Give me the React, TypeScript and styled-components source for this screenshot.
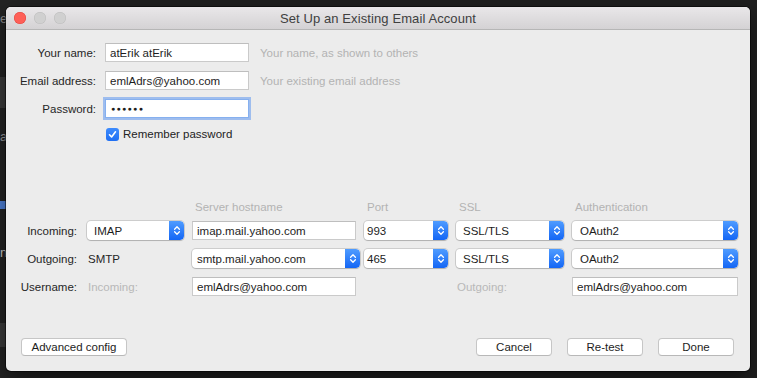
import React from "react";
import styled, { createGlobalStyle, css } from "styled-components";

const GlobalStyle = createGlobalStyle`
  html, body { margin: 0; padding: 0; background: #1e1e1e; }
  body {
    font-family: "Liberation Sans", Arial, Helvetica, sans-serif;
    -webkit-font-smoothing: antialiased;
  }
  * { box-sizing: border-box; }
`;

const FONT = `"Liberation Sans", Arial, Helvetica, sans-serif`;

/* ---------- desktop & content behind the window ---------- */

const Desktop = styled.div`
  position: relative;
  width: 757px;
  height: 378px;
  padding: 7px 7px 7px 6px;
  background: #1f1f1f;
  overflow: hidden;
`;

const BehindPanel = styled.div`
  position: absolute;
  left: 0;
  top: 0;
  width: 40px;
  height: 100%;
  background: #232323;
  display: flex;
  flex-direction: column;
  z-index: 0;
`;

const BehindBlock = styled.div<{ $mt: number; $h: number; $bg: string }>`
  margin-top: ${(p) => p.$mt}px;
  height: ${(p) => p.$h}px;
  background: ${(p) => p.$bg};
  flex: none;
`;

const BehindText = styled.div<{ $mt: number; $color: string }>`
  margin-top: ${(p) => p.$mt}px;
  font-size: 13px;
  line-height: 14px;
  color: ${(p) => p.$color};
  white-space: nowrap;
  flex: none;
`;

/* ---------- window chrome ---------- */

const Window = styled.div`
  position: relative;
  z-index: 1;
  width: 744px;
  height: 364px;
  display: flex;
  flex-direction: column;
  background: #ececec;
  border-radius: 5px;
  overflow: hidden;
  box-shadow: 0 0 0 1px rgba(0, 0, 0, 0.5), 0 8px 20px rgba(0, 0, 0, 0.5);
  font-family: ${FONT};
`;

const TitleBar = styled.div`
  flex: none;
  height: 23px;
  display: grid;
  grid-template-columns: 1fr auto 1fr;
  align-items: center;
  background: linear-gradient(#e9e7e9, #d4d2d4);
  border-bottom: 1px solid #b6b6b6;
`;

const Lights = styled.div`
  display: flex;
  gap: 8px;
  padding-left: 8px;
`;

const Light = styled.span<{ $active?: boolean }>`
  width: 12px;
  height: 12px;
  border-radius: 50%;
  ${(p) =>
    p.$active
      ? css`
          background: #fe5f57;
          box-shadow: inset 0 0 0 0.5px #e0443e;
        `
      : css`
          background: #d0d0d0;
          box-shadow: inset 0 0 0 0.5px #bcbcbc;
        `}
`;

const Title = styled.div`
  font-size: 13px;
  color: #404040;
  letter-spacing: 0.1px;
`;

const Body = styled.div`
  flex: 1;
  display: flex;
  flex-direction: column;
  padding: 13px 16px 15px 0;
  font-size: 11.5px;
  color: #232323;
`;

/* ---------- identity form ---------- */

const IdentityGrid = styled.div`
  display: grid;
  grid-template-columns: 90px 144px 1fr;
  column-gap: 9px;
  row-gap: 9px;
  align-items: center;
`;

const Label = styled.div<{ $pad?: number }>`
  text-align: right;
  padding-right: ${(p) => p.$pad ?? 0}px;
  white-space: nowrap;
  color: #262626;
`;

const Hint = styled.div`
  padding-left: 2px;
  color: #b3b3b3;
  white-space: nowrap;
`;

const Field = styled.div<{ $focused?: boolean }>`
  height: 19px;
  display: flex;
  align-items: center;
  padding: 0 4px;
  background: #fff;
  border: 1px solid #cacaca;
  border-top-color: #bebebe;
  color: #1d1d1d;
  white-space: nowrap;
  overflow: hidden;
  ${(p) =>
    p.$focused &&
    css`
      border-color: #86b0ef;
      box-shadow: 0 0 0 2px rgba(125, 170, 240, 0.7);
    `}
`;

const Dots = styled.span`
  font-size: 7px;
  letter-spacing: 1.3px;
  padding-left: 1px;
`;

const CheckRow = styled.label`
  grid-column: 2 / span 2;
  display: flex;
  align-items: center;
  gap: 4px;
  padding-left: 1px;
  height: 14px;
  white-space: nowrap;
`;

const CheckBox = styled.span`
  width: 13px;
  height: 13px;
  border-radius: 3px;
  background: linear-gradient(#3d8bfd, #1f6ff3);
  display: flex;
  align-items: center;
  justify-content: center;
`;

/* ---------- server grid ---------- */

const ServerGrid = styled.div`
  margin-top: 59px;
  display: grid;
  grid-template-columns: 73px 97px 164px 84px 108px 166px;
  grid-template-rows: 12px 19px 19px 19px;
  column-gap: 8px;
  row-gap: 9px;
  align-items: center;
`;

const ColHead = styled.div<{ $col: number }>`
  grid-column: ${(p) => p.$col};
  align-self: start;
  padding-left: 3px;
  line-height: 14px;
  color: #b3b3b3;
  white-space: nowrap;
`;

const Plain = styled.div<{ $muted?: boolean }>`
  padding-left: 1px;
  color: ${(p) => (p.$muted ? "#b8b8b8" : "#262626")};
  white-space: nowrap;
`;

const Popup = styled.div<{ $pad?: number; $wide?: number }>`
  height: 19px;
  display: flex;
  align-items: center;
  padding-left: ${(p) => p.$pad ?? 7}px;
  margin-right: ${(p) => -(p.$wide ?? 0)}px;
  background: #fff;
  border-radius: 4px;
  box-shadow: 0 0 0 1px rgba(0, 0, 0, 0.13), 0 1px 1px rgba(0, 0, 0, 0.14);
  color: #1d1d1d;
  white-space: nowrap;
  overflow: hidden;
`;

const PopupValue = styled.span`
  flex: 1;
`;

const Stepper = styled.span`
  width: 15px;
  height: 100%;
  flex: none;
  border-radius: 0 4px 4px 0;
  background: linear-gradient(#4f9cff, #1466f5);
  display: flex;
  align-items: center;
  justify-content: center;
`;

/* ---------- buttons ---------- */

const ButtonBar = styled.div`
  margin-top: auto;
  display: flex;
  align-items: center;
  padding-left: 15px;
  gap: 15px;
`;

const Spacer = styled.div`
  flex: 1;
`;

const PushButton = styled.button<{ $w: number }>`
  width: ${(p) => p.$w}px;
  height: 18px;
  padding: 0;
  background: #fff;
  border: 1px solid #c6c6c6;
  border-bottom-color: #b8b8b8;
  border-radius: 4px;
  font-family: ${FONT};
  font-size: 11.5px;
  color: #1d1d1d;
  line-height: 16px;
`;

/* ---------- icons ---------- */

const Chevrons = () => (
  <svg width="8" height="11" viewBox="0 0 8 11" fill="none">
    <path d="M1.6 4.2 L4 1.8 L6.4 4.2" stroke="#fff" strokeWidth="1.3" strokeLinecap="round" strokeLinejoin="round" />
    <path d="M1.6 6.8 L4 9.2 L6.4 6.8" stroke="#fff" strokeWidth="1.3" strokeLinecap="round" strokeLinejoin="round" />
  </svg>
);

const CheckMark = () => (
  <svg width="9" height="9" viewBox="0 0 9 9" fill="none">
    <path d="M1.5 4.8 L3.6 7 L7.5 1.8" stroke="#fff" strokeWidth="1.6" strokeLinecap="round" strokeLinejoin="round" />
  </svg>
);

const Select: React.FC<{ value: string; pad?: number; wide?: number }> = ({ value, pad, wide }) => (
  <Popup $pad={pad} $wide={wide}>
    <PopupValue>{value}</PopupValue>
    <Stepper>
      <Chevrons />
    </Stepper>
  </Popup>
);

export default function App() {
  return (
    <>
      <GlobalStyle />
      <Desktop>
        <BehindPanel>
          <BehindText $mt={12} $color="#8a8a8a">e</BehindText>
          <BehindBlock $mt={51} $h={31} $bg="#3a3a3a" />
          <BehindText $mt={22} $color="#9a9a9a">a</BehindText>
          <BehindBlock $mt={57} $h={8} $bg="#4d7fd6" />
          <BehindText $mt={37} $color="#c8c8c8">nr</BehindText>
          <BehindBlock $mt={63} $h={24} $bg="#3a3a3a" />
        </BehindPanel>

        <Window>
          <TitleBar>
            <Lights>
              <Light $active />
              <Light />
              <Light />
            </Lights>
            <Title>Set Up an Existing Email Account</Title>
            <div />
          </TitleBar>

          <Body>
            <IdentityGrid>
              <Label>Your name:</Label>
              <Field>atErik atErik</Field>
              <Hint>Your name, as shown to others</Hint>

              <Label>Email address:</Label>
              <Field>emlAdrs@yahoo.com</Field>
              <Hint>Your existing email address</Hint>

              <Label>Password:</Label>
              <Field $focused>
                <Dots>●●●●●●</Dots>
              </Field>
              <div />

              <CheckRow>
                <CheckBox>
                  <CheckMark />
                </CheckBox>
                Remember password
              </CheckRow>
            </IdentityGrid>

            <ServerGrid>
              <ColHead $col={3}>Server hostname</ColHead>
              <ColHead $col={4}>Port</ColHead>
              <ColHead $col={5}>SSL</ColHead>
              <ColHead $col={6}>Authentication</ColHead>

              <Label $pad={2}>Incoming:</Label>
              <Select value="IMAP" />
              <Field>imap.mail.yahoo.com</Field>
              <Select value="993" pad={3} />
              <Select value="SSL/TLS" />
              <Select value="OAuth2" pad={8} />

              <Label $pad={2}>Outgoing:</Label>
              <Plain>SMTP</Plain>
              <Select value="smtp.mail.yahoo.com" pad={5} wide={4} />
              <Select value="465" pad={3} />
              <Select value="SSL/TLS" />
              <Select value="OAuth2" pad={8} />

              <Label $pad={2}>Username:</Label>
              <Plain $muted>Incoming:</Plain>
              <Field>emlAdrs@yahoo.com</Field>
              <div />
              <Plain $muted>Outgoing:</Plain>
              <Field>emlAdrs@yahoo.com</Field>
            </ServerGrid>

            <ButtonBar>
              <PushButton $w={106}>Advanced config</PushButton>
              <Spacer />
              <PushButton $w={76}>Cancel</PushButton>
              <PushButton $w={76}>Re-test</PushButton>
              <PushButton $w={76}>Done</PushButton>
            </ButtonBar>
          </Body>
        </Window>
      </Desktop>
    </>
  );
}
